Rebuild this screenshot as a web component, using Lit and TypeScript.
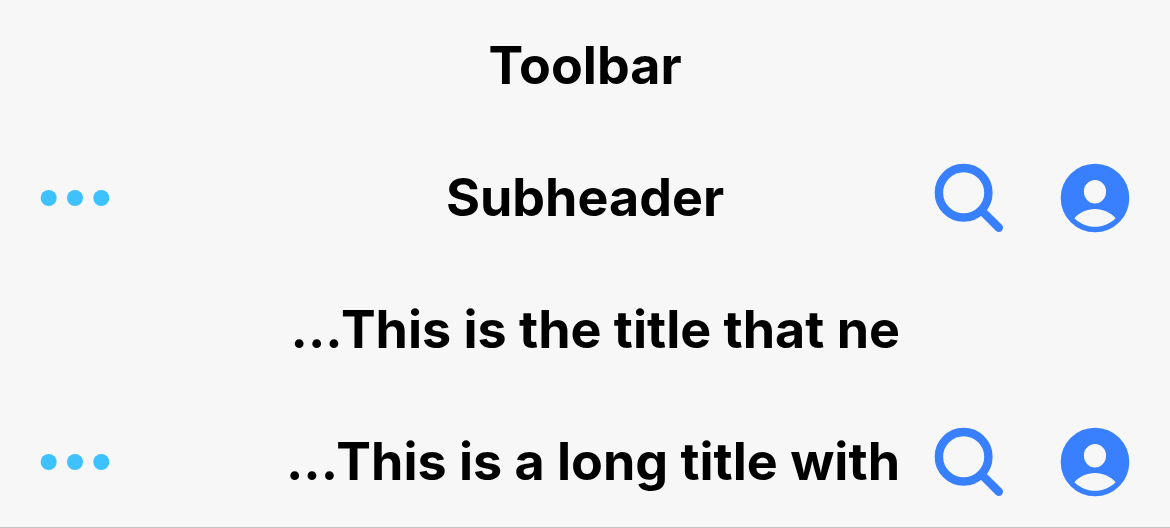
import { LitElement, html, css } from "lit";
import { customElement, property } from "lit/decorators.js";
import { classMap } from "lit/directives/class-map.js";

@customElement("app-toolbar")
class AppToolbar extends LitElement {
  @property() label = "";
  @property({ type: Boolean }) actions = false;
  @property({ type: Boolean }) long = false;

  static styles = css`
    :host { display: block; }
    .bar { display: grid; grid-template-columns: 270px minmax(0, 1fr) 270px; align-items: center; min-height: 132px; }
    .start { padding-left: 39px; display: flex; }
    .end { padding-right: 39px; display: flex; justify-content: flex-end; gap: 54px; }
    button { border: 0; padding: 0; margin: 0; background: none; display: flex; color: #3880ff; cursor: pointer; }
    .more { color: #3dc2ff; }
    svg { display: block; width: 72px; height: 72px; fill: currentColor; }
    h1 { margin: 0; font: 700 52px/66px Inter, sans-serif; text-align: center; white-space: nowrap; overflow: hidden; color: #000; }
    .long { text-align: right; }
  `;

  render() {
    return html`<header class="bar">
      <div class="start">
        ${this.actions ? html`<button class="more" aria-label="More">
          <svg viewBox="0 0 512 512"><circle cx="256" cy="256" r="57"/><circle cx="69" cy="256" r="57"/><circle cx="443" cy="256" r="57"/></svg>
        </button>` : ""}
      </div>
      <h1 class=${classMap({ long: this.long })}>${this.label}</h1>
      <div class="end">
        ${this.actions ? html`<button aria-label="Search">
          <svg viewBox="0 0 512 512"><path d="M218 42a176 176 0 1 0 0 352 176 176 0 0 0 0-352" fill="none" stroke="currentColor" stroke-width="60"/><path d="M344 344 468 468" stroke="currentColor" stroke-width="60" stroke-linecap="round"/></svg>
        </button>
        <button aria-label="Profile">
          <svg viewBox="0 0 512 512"><path fill-rule="evenodd" d="M256 12a244 244 0 1 0 0 488 244 244 0 0 0 0-488ZM256 128c45 0 79 37 79 81 0 47-35 86-79 86s-79-39-79-86c0-44 34-81 79-81ZM256 461c-57 0-109-23-146-61 29-38 90-65 146-65s117 27 146 65c-37 38-89 61-146 61Z"/></svg>
        </button>` : ""}
      </div>
    </header>`;
  }
}

@customElement("app-root")
class AppRoot extends LitElement {
  static styles = css`
    :host { display: block; background: #f7f7f7; }
    .page { box-shadow: inset 0 -1px #c4c4c4; }
  `;
  render() {
    return html`<div class="page">
      <app-toolbar label="Toolbar"></app-toolbar>
      <app-toolbar label="Subheader" actions></app-toolbar>
      <app-toolbar label="...This is the title that ne" long></app-toolbar>
      <app-toolbar label="...This is a long title with" long actions></app-toolbar>
    </div>`;
  }
}
